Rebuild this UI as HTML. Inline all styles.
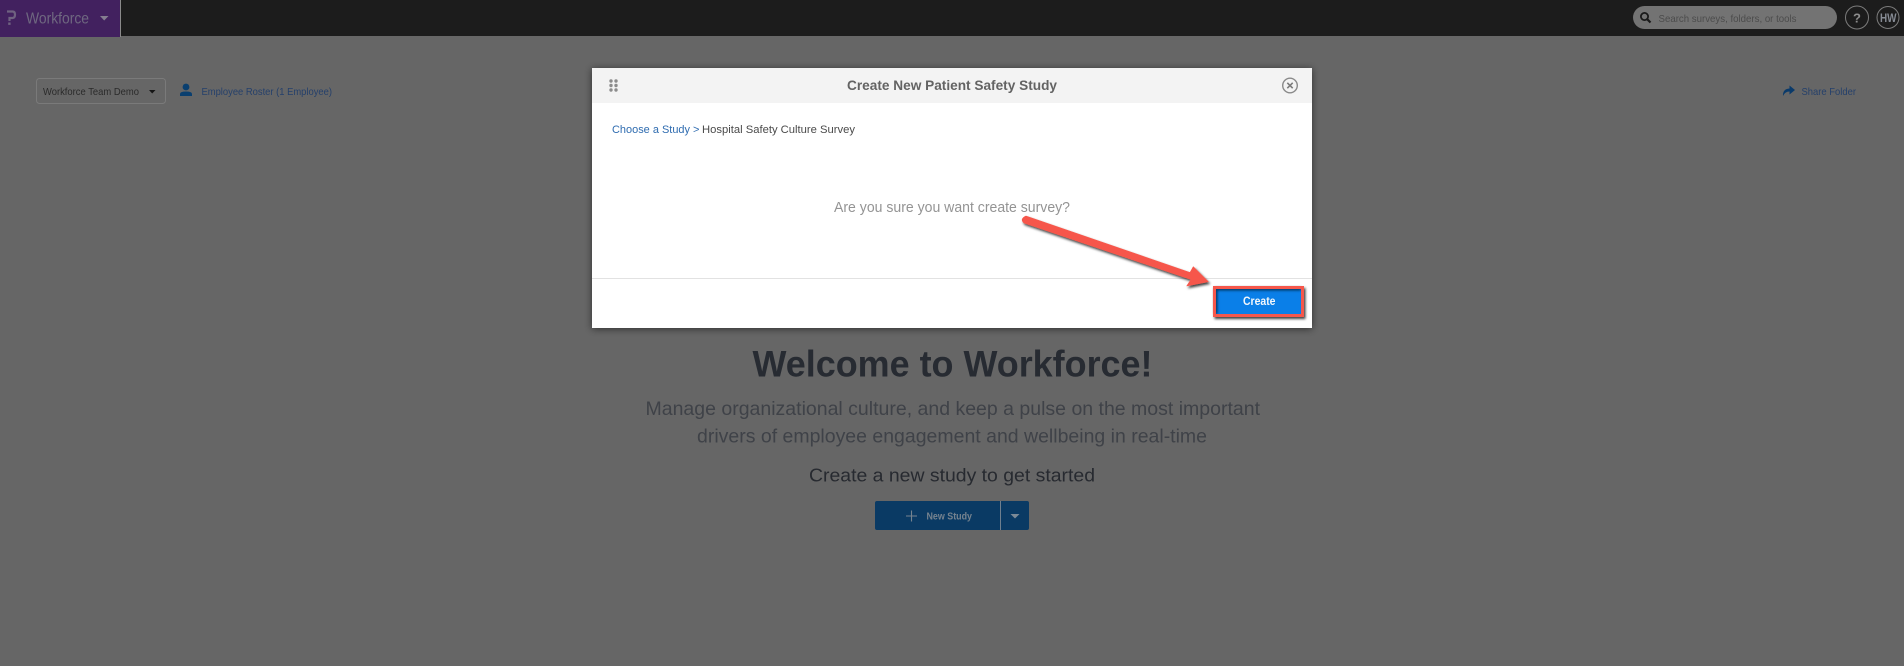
<!DOCTYPE html>
<html lang="en">
<head>
<meta charset="utf-8">
<title>Create New Patient Safety Study</title>
<style>
html,body{margin:0;padding:0;width:1904px;height:666px;overflow:hidden;background:#666;}
svg{display:block;position:absolute;left:0;top:0;}
text{font-family:"Liberation Sans",sans-serif;}
</style>
</head>
<body>
<svg width="1904" height="666" viewBox="0 0 1904 666" xmlns="http://www.w3.org/2000/svg">
<defs>
<filter id="dlg" x="-5%" y="-10%" width="110%" height="120%"><feDropShadow dx="0" dy="1" stdDeviation="4" flood-color="#000" flood-opacity=".55"/></filter>
<filter id="arr" x="-10%" y="-20%" width="125%" height="150%"><feDropShadow dx="1.5" dy="2" stdDeviation="1.4" flood-color="#000" flood-opacity=".75"/></filter>
<filter id="ib" x="-10%" y="-20%" width="120%" height="140%"><feGaussianBlur stdDeviation="1.2"/></filter>
</defs>

<rect width="1904" height="666" fill="#666"/>
<rect width="1904" height="36" fill="#1c1c1c"/>
<rect width="120" height="37" fill="#42215f"/>
<rect x="120" width="1" height="37" fill="#8a8a8a"/>

<path d="M7 11.5H12.5Q15 11.5 15 14.5Q15 18 12.5 18H9.5V21" fill="none" stroke="#6f6280" stroke-width="2.2"/>
<rect x="8.2" y="22.5" width="2.4" height="2.4" fill="#6f6280"/>
<text x="26" y="23.5" font-size="16" fill="#6f6880" textLength="63" lengthAdjust="spacingAndGlyphs">Workforce</text>
<path d="M100 16H108.5L104.2 20.5Z" fill="#857e90"/>

<rect x="36.5" y="78.5" width="129" height="25" rx="3" fill="none" stroke="#7a7a7a"/>
<text x="43" y="95" font-size="10.5" fill="#2a2a2a" textLength="96" lengthAdjust="spacingAndGlyphs">Workforce Team Demo</text>
<path d="M149 90H155.5L152.2 93.5Z" fill="#151515"/>
<circle cx="186" cy="87" r="3.4" fill="#0a3f6f"/>
<path d="M180 96V94Q180 91.5 186 91.5Q192 91.5 192 94V96Z" fill="#0a3f6f"/>
<text x="201.5" y="95" font-size="10.5" fill="#25406b" textLength="130.5" lengthAdjust="spacingAndGlyphs">Employee Roster (1 Employee)</text>

<rect x="1633" y="6" width="204" height="23" rx="11.5" fill="#737373"/>
<circle cx="1644.5" cy="16.5" r="3.6" fill="none" stroke="#1a1a1a" stroke-width="1.8"/>
<path d="M1647.2 19.2L1650.5 22.5" stroke="#1a1a1a" stroke-width="2.2"/>
<text x="1658.5" y="22" font-size="10.5" fill="#4c4c4c" textLength="138" lengthAdjust="spacingAndGlyphs">Search surveys, folders, or tools</text>
<circle cx="1857" cy="17.5" r="11.5" fill="none" stroke="#7c7c7c" stroke-width="1"/>
<text x="1857" y="22.5" font-size="13" font-weight="bold" fill="#8d8d8d" text-anchor="middle">?</text>
<circle cx="1888" cy="17.5" r="11" fill="none" stroke="#7c7c7c" stroke-width="1"/>
<text x="1880" y="22" font-size="11.5" font-weight="bold" fill="#868b94" textLength="16.5" lengthAdjust="spacingAndGlyphs">HW</text>

<path d="M1783 96Q1782.5 89 1789.5 88.5V85.5L1795 90L1789.5 94.5V91.5Q1785 91.5 1783 96Z" fill="#0a3a6a"/>
<text x="1801.5" y="95" font-size="10.5" fill="#25406b" textLength="54.5" lengthAdjust="spacingAndGlyphs">Share Folder</text>

<text x="752.5" y="376.5" font-size="37" font-weight="bold" fill="#272b32" textLength="400" lengthAdjust="spacingAndGlyphs">Welcome to Workforce!</text>
<text x="645.5" y="415" font-size="19.5" fill="#3f4248" textLength="614.5" lengthAdjust="spacingAndGlyphs">Manage organizational culture, and keep a pulse on the most important</text>
<text x="697" y="442.5" font-size="19.5" fill="#3f4248" textLength="510" lengthAdjust="spacingAndGlyphs">drivers of employee engagement and wellbeing in real-time</text>
<text x="809" y="481.5" font-size="18" fill="#272a30" textLength="286" lengthAdjust="spacingAndGlyphs">Create a new study to get started</text>

<rect x="875" y="501" width="154" height="29" rx="2" fill="#0a3a64"/>
<rect x="1000" y="501" width="1" height="29" fill="#6f7f8e"/>
<path d="M906 516H917M911.5 510.500V521.500" stroke="#76838f" stroke-width="1.1" fill="none"/>
<text x="926.5" y="519.5" font-size="10" font-weight="bold" fill="#76838f" textLength="45.5" lengthAdjust="spacingAndGlyphs">New Study</text>
<path d="M1010.5 514H1019.5L1015 518.5Z" fill="#7c8a97"/>

<rect x="592" y="68" width="720" height="260" fill="#fff" filter="url(#dlg)"/>
<rect x="592" y="68" width="720" height="35" fill="#f3f3f3"/>
<g fill="#8c8c8c">
<circle cx="611" cy="81" r="1.7"/><circle cx="616" cy="81" r="1.7"/>
<circle cx="611" cy="85.5" r="1.7"/><circle cx="616" cy="85.5" r="1.7"/>
<circle cx="611" cy="90" r="1.7"/><circle cx="616" cy="90" r="1.7"/>
</g>
<text x="847" y="90" font-size="14" font-weight="bold" fill="#636363" textLength="210" lengthAdjust="spacingAndGlyphs">Create New Patient Safety Study</text>
<circle cx="1290" cy="85.5" r="7.3" fill="none" stroke="#8a8a8a" stroke-width="1.4"/>
<path d="M1287.3 82.8L1292.7 88.2M1292.7 82.8L1287.3 88.2" stroke="#7a7a7a" stroke-width="1.6"/>

<text x="612" y="133" font-size="11" fill="#2f6cb0" textLength="78" lengthAdjust="spacingAndGlyphs">Choose a Study</text>
<text x="693" y="133" font-size="11" fill="#2f6cb0">&gt;</text>
<text x="702" y="133" font-size="11" fill="#4a4a4a" textLength="153" lengthAdjust="spacingAndGlyphs">Hospital Safety Culture Survey</text>
<text x="834" y="212" font-size="14.5" fill="#949494" textLength="236" lengthAdjust="spacingAndGlyphs">Are you sure you want create survey?</text>

<rect x="592" y="278" width="720" height="1" fill="#e2e2e2"/>

<path d="M1026 216L1190 272.500L1193.300 266.700L1208.300 281.700L1186.700 286L1191 279.500L1024 223Q1019.500 219 1026 216Z" fill="#f6574b" stroke="#f6574b" stroke-width=".6" stroke-linejoin="round" filter="url(#arr)"/>

<rect x="1214.5" y="287.5" width="88" height="28" fill="#f6574b" stroke="#f6574b" stroke-width="3" filter="url(#arr)"/>
<rect x="1216" y="289" width="85" height="25" fill="#0a7fe8"/>
<path d="M1216 314V289H1301" fill="none" stroke="#06345f" stroke-width="3" filter="url(#ib)"/>
<path d="M1216 313H1301" stroke="#06487f" stroke-width="1.5" filter="url(#ib)"/>
<rect x="1214.5" y="287.5" width="88" height="28" fill="none" stroke="#f6574b" stroke-width="3"/>
<text x="1243" y="305" font-size="11.5" font-weight="bold" fill="#f2f7fc" textLength="32.5" lengthAdjust="spacingAndGlyphs">Create</text>
</svg>
</body>
</html>
